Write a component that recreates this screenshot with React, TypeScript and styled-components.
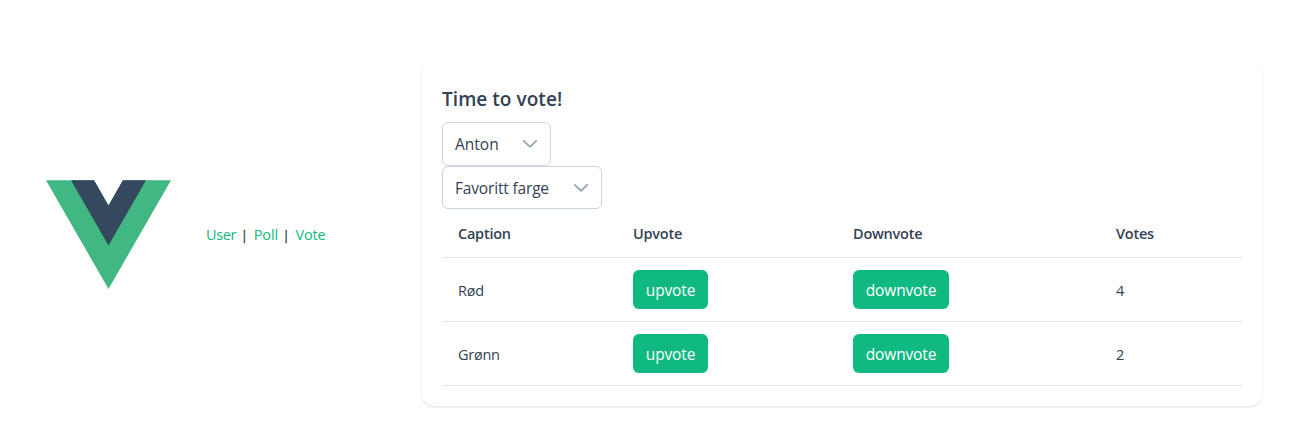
import React from "react";
import styled, { createGlobalStyle } from "styled-components";

const GlobalStyle = createGlobalStyle`
  *, *::before, *::after { box-sizing: border-box; }
  body {
    margin: 0;
    background: #ffffff;
    color: #334155;
    font-family: "Segoe UI", "Open Sans", "Noto Sans", sans-serif;
    font-size: 15px;
  }
`;

const Page = styled.div`
  display: grid;
  grid-template-columns: 422px 840px;
  height: 442px;
  padding-top: 62px;
  align-items: start;
`;

const Header = styled.header`
  display: flex;
  align-items: center;
  height: 345px;
  padding-left: 46px;
`;

const Logo = styled.svg`
  display: block;
  width: 125px;
  height: 109px;
  margin-right: 35px;
`;

const Nav = styled.nav`
  display: flex;
  font-size: 14.5px;
  line-height: 24px;
  color: #2c3e50;
`;

const NavLink = styled.a<{ $width: number; $spacing: number }>`
  width: ${(p) => p.$width}px;
  letter-spacing: ${(p) => p.$spacing}px;
  white-space: nowrap;
  color: #10b981;
  text-decoration: none;
`;

const Divider = styled.span`
  width: 17.7px;
  padding-right: 1px;
  font-size: 13px;
  line-height: 24px;
  text-align: center;
  -webkit-text-stroke: 0.3px #2c3e50;
`;

const Card = styled.main`
  height: 344px;
  padding: 20px;
  border-radius: 12px;
  background: #ffffff;
  box-shadow: 0 1px 3px rgba(0, 0, 0, 0.1), 0 1px 2px -1px rgba(0, 0, 0, 0.1);
`;

const Title = styled.h1`
  margin: 0 0 8px;
  height: 32px;
  font-size: 19px;
  font-weight: 600;
  line-height: 34px;
  letter-spacing: 0.05px;
`;

const Select = styled.div<{ $width: number; $height: number }>`
  display: flex;
  align-items: center;
  justify-content: space-between;
  width: ${(p) => p.$width}px;
  height: ${(p) => p.$height}px;
  padding: 0 13px 0 12px;
  border: 1px solid #cbd5e1;
  border-radius: 6px;
`;

const SelectLabel = styled.span<{ $spacing: number }>`
  font-size: 15.5px;
  line-height: 22px;
  letter-spacing: ${(p) => p.$spacing}px;
  white-space: nowrap;
`;

const Chevron = styled.svg`
  display: block;
  width: 14px;
  height: 14px;
`;

const Table = styled.table`
  width: 800px;
  table-layout: fixed;
  border-collapse: separate;
  border-spacing: 0;
`;

const Col = styled.col<{ $width: number }>`
  width: ${(p) => p.$width}px;
`;

const HeadCell = styled.th`
  height: 49px;
  padding: 0 16px;
  border-bottom: 1px solid #e2e8f0;
  font-size: 14.5px;
  font-weight: 600;
  letter-spacing: -0.24px;
  text-align: left;
`;

const Cell = styled.td`
  height: 64px;
  padding: 0 16px;
  border-bottom: 1px solid #e2e8f0;
  font-size: 14.5px;
  letter-spacing: -0.25px;
`;

const CellText = styled.span`
  display: block;
  padding-top: 2px;
`;

const VoteButton = styled.button<{ $width: number }>`
  display: block;
  width: ${(p) => p.$width}px;
  height: 39px;
  padding: 1px 0 0;
  border: 0;
  border-radius: 6px;
  background: #10b981;
  color: #ffffff;
  font-family: inherit;
  font-size: 15.5px;
  line-height: 22px;
  letter-spacing: -0.15px;
`;

function DropdownIcon() {
  return (
    <Chevron viewBox="0 0 14 14" fill="none">
      <path
        d="M0.8 3.9L7 9.9L13.2 3.9"
        stroke="#94a3b8"
        strokeWidth="1.8"
        strokeLinecap="round"
        strokeLinejoin="round"
      />
    </Chevron>
  );
}

const columns = [
  { label: "Caption", width: 175 },
  { label: "Upvote", width: 220 },
  { label: "Downvote", width: 263 },
  { label: "Votes", width: 142 },
];

const options = [
  { caption: "Rød", votes: 4 },
  { caption: "Grønn", votes: 2 },
];

export default function App() {
  return (
    <>
      <GlobalStyle />
      <Page>
        <Header>
          <Logo viewBox="0 -0.6 261.76 227.29" preserveAspectRatio="none">
            <path
              fill="#41b883"
              d="M161.096.001l-30.225 52.351L100.647.001H-.005l130.877 226.688L261.749.001z"
            />
            <path
              fill="#34495e"
              d="M161.096.001l-30.225 52.351L100.647.001H52.346l78.526 136.01L209.398.001z"
            />
          </Logo>
          <Nav>
            <NavLink $width={30} $spacing={-0.35}>User</NavLink>
            <Divider>|</Divider>
            <NavLink $width={24} $spacing={-0.1}>Poll</NavLink>
            <Divider>|</Divider>
            <NavLink $width={31} $spacing={-0.1}>Vote</NavLink>
          </Nav>
        </Header>
        <Card>
          <Title>Time to vote!</Title>
          <Select $width={109} $height={44}>
            <SelectLabel $spacing={0}>Anton</SelectLabel>
            <DropdownIcon />
          </Select>
          <Select $width={160} $height={43}>
            <SelectLabel $spacing={-0.17}>Favoritt farge</SelectLabel>
            <DropdownIcon />
          </Select>
          <Table>
            <colgroup>
              {columns.map((c) => (
                <Col key={c.label} $width={c.width} />
              ))}
            </colgroup>
            <thead>
              <tr>
                {columns.map((c) => (
                  <HeadCell key={c.label}>{c.label}</HeadCell>
                ))}
              </tr>
            </thead>
            <tbody>
              {options.map((o) => (
                <tr key={o.caption}>
                  <Cell>
                    <CellText>{o.caption}</CellText>
                  </Cell>
                  <Cell>
                    <VoteButton $width={75}>upvote</VoteButton>
                  </Cell>
                  <Cell>
                    <VoteButton $width={96}>downvote</VoteButton>
                  </Cell>
                  <Cell>
                    <CellText>{o.votes}</CellText>
                  </Cell>
                </tr>
              ))}
            </tbody>
          </Table>
        </Card>
      </Page>
    </>
  );
}
